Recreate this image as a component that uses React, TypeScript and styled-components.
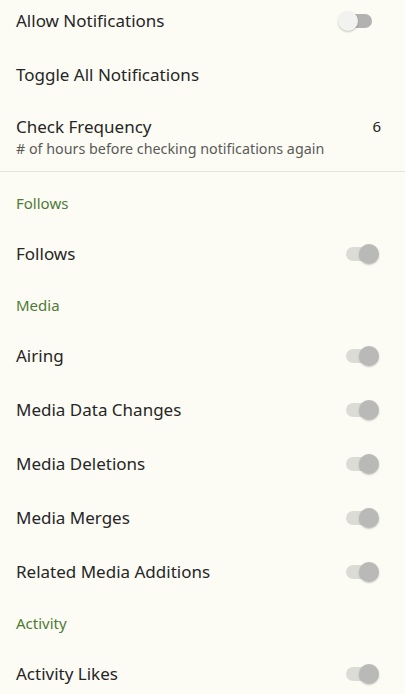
import React from "react";
import styled, { createGlobalStyle } from "styled-components";

const Global = createGlobalStyle`
  html, body {
    margin: 0;
    padding: 0;
    background: #fcfcf5;
    overflow: hidden;
  }
  body {
    font-family: "Noto Sans", "Open Sans", sans-serif;
    color: #222222;
  }
`;

const Page = styled.div`
  width: 405px;
  height: 694px;
  overflow: hidden;
  background: #fcfcf5;
`;

const List = styled.div`
  display: flex;
  flex-direction: column;
  margin-top: -6px;
`;

const Row = styled.div<{ $h?: number }>`
  display: flex;
  align-items: center;
  justify-content: space-between;
  height: ${(p) => p.$h ?? 54}px;
  padding: 0 24px 0 16px;
  box-sizing: border-box;
`;

const TextCol = styled.div`
  display: flex;
  flex-direction: column;
  gap: 2px;
`;

const Title = styled.div`
  font-size: 17px;
  line-height: 22px;
  color: #262626;
`;

const Subtitle = styled.div`
  font-size: 14.3px;
  line-height: 18px;
  color: #5a5a58;
`;

const Value = styled.div`
  font-size: 15px;
  color: #222222;
  align-self: flex-start;
  margin-top: 14px;
`;

const Divider = styled.div`
  height: 1px;
  background: #e4e4de;
  margin-bottom: 7px;
`;

const Header = styled.div`
  display: flex;
  align-items: center;
  height: 48px;
  padding: 0 16px;
  font-size: 15px;
  color: #4f7a36;
`;

const SwitchBox = styled.div`
  position: relative;
  width: 41px;
  height: 22px;
  margin-right: 2px;
  flex-shrink: 0;
`;

const Track = styled.div<{ $on: boolean }>`
  position: absolute;
  left: 8px;
  width: 26px;
  top: 4px;
  height: 14px;
  border-radius: 7px;
  background: ${(p) => (p.$on ? "#dcdcd6" : "#b2b2b0")};
`;

const Thumb = styled.div<{ $on: boolean }>`
  position: absolute;
  top: 1px;
  left: ${(p) => (p.$on ? 21 : 0)}px;
  width: 20px;
  height: 20px;
  border-radius: 50%;
  background: ${(p) => (p.$on ? "#b9b9b7" : "#f2f2f0")};
  box-shadow: 0 1px 2px rgba(0, 0, 0, 0.22);
`;

const Switch = ({ on }: { on: boolean }) => (
  <SwitchBox>
    <Track $on={on} />
    <Thumb $on={on} />
  </SwitchBox>
);

const ToggleRow = ({ label, on = true }: { label: string; on?: boolean }) => (
  <Row>
    <Title>{label}</Title>
    <Switch on={on} />
  </Row>
);

export default function App() {
  return (
    <Page>
      <Global />
      <List>
        <ToggleRow label="Allow Notifications" on={false} />
        <Row>
          <Title>Toggle All Notifications</Title>
        </Row>
        <Row $h={69}>
          <TextCol>
            <Title>Check Frequency</Title>
            <Subtitle># of hours before checking notifications again</Subtitle>
          </TextCol>
          <Value>6</Value>
        </Row>
        <Divider />
        <Header>Follows</Header>
        <ToggleRow label="Follows" />
        <Header>Media</Header>
        <ToggleRow label="Airing" />
        <ToggleRow label="Media Data Changes" />
        <ToggleRow label="Media Deletions" />
        <ToggleRow label="Media Merges" />
        <ToggleRow label="Related Media Additions" />
        <Header>Activity</Header>
        <ToggleRow label="Activity Likes" />
      </List>
    </Page>
  );
}
